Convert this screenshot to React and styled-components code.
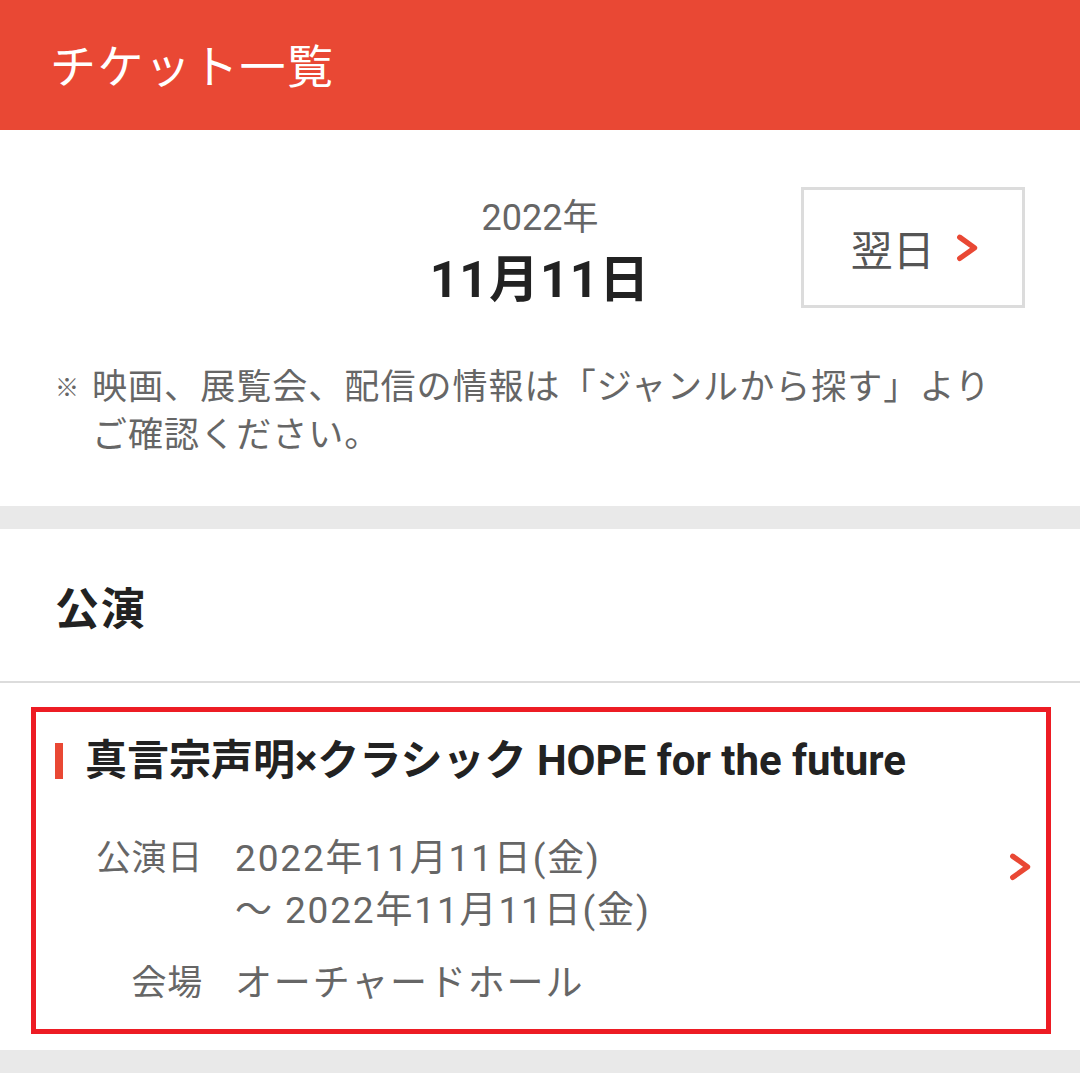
import styled, { createGlobalStyle } from "styled-components";

const GlobalStyle = createGlobalStyle`
  body {
    margin: 0;
    background: #fff;
    font-family: Roboto, "Noto Sans CJK JP", sans-serif;
    color: #222;
  }
`;

const Page = styled.div`
  width: 1080px;
`;

const Header = styled.header`
  height: 130px;
  background: #e94834;
  display: flex;
  align-items: center;
  padding-left: 50px;
`;

const HeaderTitle = styled.h1`
  margin: 0 0 4px;
  font-size: 46px;
  font-weight: 400;
  letter-spacing: 0.03em;
  color: #fff;
`;

const DateSection = styled.section`
  padding: 57px 55px 46px;
`;

const DateRow = styled.div`
  display: grid;
  grid-template-columns: 1fr auto 1fr;
  align-items: start;
`;

const DateBlock = styled.div`
  grid-column: 2;
  margin-top: 9px;
  text-align: center;
`;

const Year = styled.div`
  font-size: 36px;
  line-height: 44px;
  color: #666;
`;

const Day = styled.div`
  font-size: 50px;
  line-height: 80px;
  font-weight: 700;
  color: #222;
  letter-spacing: 0.02em;
`;

const NextButton = styled.button`
  grid-column: 3;
  justify-self: end;
  width: 224px;
  height: 121px;
  border: 3px solid #dcdcdc;
  background: #fff;
  display: flex;
  align-items: center;
  justify-content: center;
  gap: 20px;
  font-family: inherit;
  font-size: 42px;
  color: #555;
  padding: 0 0 0 4px;
`;

const Note = styled.p`
  margin: 44px 0 0;
  display: flex;
  font-size: 35px;
  line-height: 48px;
  color: #666;
  letter-spacing: 0.03em;
`;

const NoteMark = styled.span`
  flex: none;
  width: 37px;
  font-size: 24px;
`;

const Band = styled.div`
  height: 23px;
  background: #e9e9e9;
`;

const SectionHead = styled.h2`
  margin: 0;
  padding: 50px 55px 39px;
  font-size: 44px;
  line-height: 63px;
  font-weight: 700;
  letter-spacing: 0.04em;
  color: #222;
  border-bottom: 2px solid #dcdcdc;
`;

const List = styled.div`
  padding: 24px 29px 16px 31px;
`;

const Card = styled.article`
  border: 5px solid #ed1c24;
  display: flex;
  align-items: center;
  padding: 22px 14px 19px 19px;
`;

const CardBody = styled.div`
  flex: 1;
`;

const CardArrow = styled.span`
  display: flex;
  margin-bottom: 10px;
`;

const CardTitle = styled.h3`
  margin: 0 0 45px;
  display: flex;
  align-items: center;
  gap: 22px;
  font-size: 42px;
  line-height: 54px;
  font-weight: 700;
  color: #222;
  &::before {
    content: "";
    width: 8px;
    height: 36px;
    background: #e94834;
  }
`;

const InfoList = styled.dl`
  margin: 0;
  display: grid;
  grid-template-columns: 148px 1fr;
  column-gap: 32px;
  row-gap: 21px;
  line-height: 52px;
  color: #666;
`;

const InfoLabel = styled.dt`
  text-align: right;
  font-size: 35px;
  letter-spacing: 0.02em;
`;

const InfoValue = styled.dd`
  margin: 0;
  font-size: 37px;
  letter-spacing: 0.05em;
`;

const Chevron = ({ size = 26 }) => (
  <svg width={size * 0.9} height={size * 1.1} viewBox="0 0 22 28" fill="none">
    <path
      d="M4 4 L18 14 L4 24"
      stroke="#e94834"
      strokeWidth="5"
      strokeLinecap="round"
      strokeLinejoin="round"
    />
  </svg>
);

export default function App() {
  return (
    <Page>
      <GlobalStyle />
      <Header>
        <HeaderTitle>チケット一覧</HeaderTitle>
      </Header>
      <DateSection>
        <DateRow>
          <DateBlock>
            <Year>2022年</Year>
            <Day>11月11日</Day>
          </DateBlock>
          <NextButton>
            翌日
            <Chevron size={27} />
          </NextButton>
        </DateRow>
        <Note>
          <NoteMark>※</NoteMark>
          <span>
            映画、展覧会、配信の情報は「ジャンルから探す」より
            <br />
            ご確認ください。
          </span>
        </Note>
      </DateSection>
      <Band />
      <SectionHead>公演</SectionHead>
      <List>
        <Card>
          <CardBody>
            <CardTitle>真言宗声明×クラシック HOPE for the future</CardTitle>
            <InfoList>
              <InfoLabel>公演日</InfoLabel>
              <InfoValue>
                2022年11月11日(金)
                <br />〜 2022年11月11日(金)
              </InfoValue>
              <InfoLabel>会場</InfoLabel>
              <InfoValue>オーチャードホール</InfoValue>
            </InfoList>
          </CardBody>
          <CardArrow>
            <Chevron size={27} />
          </CardArrow>
        </Card>
      </List>
      <Band />
    </Page>
  );
}
